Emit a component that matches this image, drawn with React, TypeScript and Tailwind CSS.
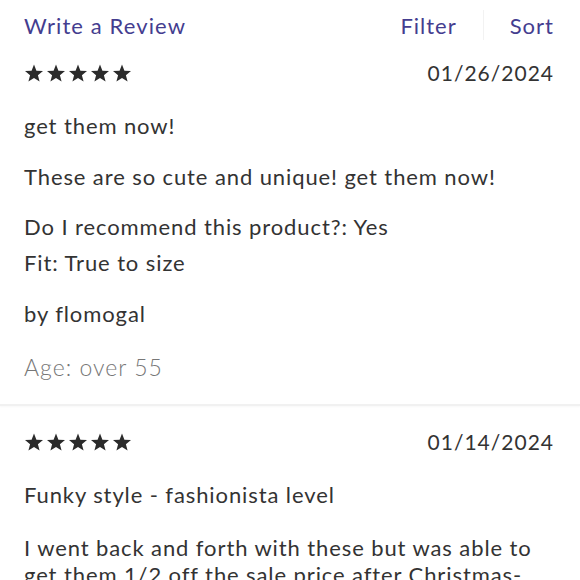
import React from 'react';

// Review shape
interface Review {
  id: string;
  date: string;
  title: string;
  body: string;
  recommend?: string;
  fit?: string;
  author?: string;
  age?: string;
}

const reviews: Review[] = [
  {
    id: 'r1',
    date: '01/26/2024',
    title: 'get them now!',
    body: 'These are so cute and unique! get them now!',
    recommend: 'Yes',
    fit: 'True to size',
    author: 'flomogal',
    age: 'over 55',
  },
  {
    id: 'r2',
    date: '01/14/2024',
    title: 'Funky style - fashionista level',
    body: 'I went back and forth with these but was able to get them 1/2 off the sale price after Christmas- and I love them so much.',
  },
];

const Star: React.FC = () => (
  <svg viewBox="0 0 24 24" className="w-[20px] h-[20px]" fill="#2b2b2b">
    <path d="M12 1.8l2.9 7.4 7.9.4-6.1 5 2 7.7L12 18l-6.7 4.3 2-7.7-6.1-5 7.9-.4z" />
  </svg>
);

const ReviewItem: React.FC<{ review: Review; className?: string }> = ({ review, className = '' }) => {
  return (
    <div className={`px-6 ${className}`}>
      {/* Stars + date */}
      <div className="h-[46px] flex items-center justify-between">
        <div className="flex gap-[2px]">
          {[0, 1, 2, 3, 4].map(i => (
            <Star key={i} />
          ))}
        </div>
        <span className="text-[21px] text-[#333] tracking-[1px] mr-[2px]">{review.date}</span>
      </div>

      <p className="mt-[16px] text-[22px] leading-[28px] tracking-[0.9px] text-[#333]">{review.title}</p>
      <p className={`${review.recommend ? 'mt-[23px]' : 'mt-[25px]'} text-[22px] leading-[27px] tracking-[0.9px] text-[#333]`}>
        {review.body}
      </p>

      {review.recommend && (
        <p className="mt-[23px] text-[22px] leading-[28px] tracking-[0.9px] text-[#333]">
          Do I recommend this product?: {review.recommend}
        </p>
      )}
      {review.fit && (
        <p className="mt-[8px] text-[22px] leading-[28px] tracking-[0.9px] text-[#333]">Fit: {review.fit}</p>
      )}
      {review.author && (
        <p className="mt-[23px] text-[22px] leading-[28px] tracking-[0.9px] text-[#333]">by {review.author}</p>
      )}
      {review.age && (
        <p className="mt-[24px] text-[23px] leading-[30px] tracking-[1px] font-light text-[#777]">Age: {review.age}</p>
      )}
      {review.age && <div className="h-[22px]" />}
    </div>
  );
};

export default function App() {
  return (
    <div className="w-[580px] h-[580px] overflow-hidden bg-white" style={{ fontFamily: 'Lato, "Open Sans", sans-serif' }}>
      {/* Header */}
      <div className="h-[50px] pl-6 pr-[26px] flex items-center justify-between">
        <a href="#" className="text-[22px] tracking-[1.1px] text-[#443d8f]">Write a Review</a>
        <div className="flex items-center">
          <a href="#" className="text-[22px] tracking-[1px] text-[#443d8f]">Filter</a>
          <div className="w-px h-[30px] bg-[#f2f2f2] mx-[26px]" />
          <a href="#" className="text-[22px] tracking-[1px] text-[#443d8f]">Sort</a>
        </div>
      </div>

      <ReviewItem review={reviews[0]} />
      <div className="h-[2px] bg-[#f1f1f1] shadow-[0_1px_2px_rgba(0,0,0,0.03)]" />
      <ReviewItem review={reviews[1]} className="pt-[13px]" />
    </div>
  );
}
